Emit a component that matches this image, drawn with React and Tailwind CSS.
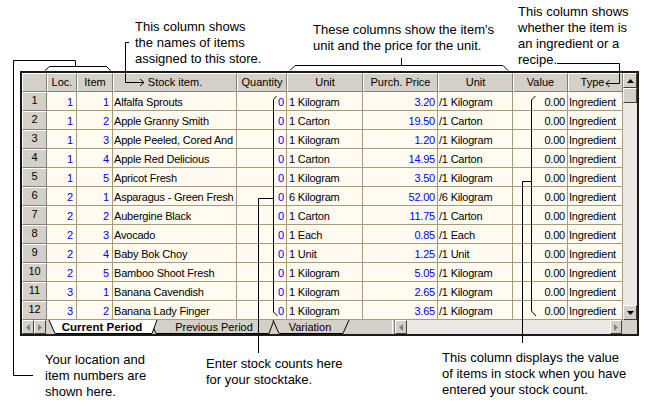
import React from "react";

const rows = [
  [1, 1, "Alfalfa Sprouts", "1 Kilogram", "3.20", "/1 Kilogram"],
  [1, 2, "Apple Granny Smith", "1 Carton", "19.50", "/1 Carton"],
  [1, 3, "Apple Peeled, Cored And", "1 Kilogram", "1.20", "/1 Kilogram"],
  [1, 4, "Apple Red Delicious", "1 Carton", "14.95", "/1 Carton"],
  [1, 5, "Apricot Fresh", "1 Kilogram", "3.50", "/1 Kilogram"],
  [2, 1, "Asparagus - Green Fresh", "6 Kilogram", "52.00", "/6 Kilogram"],
  [2, 2, "Aubergine Black", "1 Carton", "11.75", "/1 Carton"],
  [2, 3, "Avocado", "1 Each", "0.85", "/1 Each"],
  [2, 4, "Baby Bok Choy", "1 Unit", "1.25", "/1 Unit"],
  [2, 5, "Bamboo Shoot Fresh", "1 Kilogram", "5.05", "/1 Kilogram"],
  [3, 1, "Banana Cavendish", "1 Kilogram", "2.65", "/1 Kilogram"],
  [3, 2, "Banana Lady Finger", "1 Kilogram", "3.65", "/1 Kilogram"],
];

const raised =
  "bg-[#d4d0c8] border border-white border-r-[#808080] border-b-[#808080]";

const Cell = ({ className, children }) => (
  <div
    className={`h-[19px] shrink-0 overflow-hidden whitespace-nowrap border-r border-b border-[#ab9a78] bg-[#fffbf0] pt-[3px] leading-[15px] tracking-[-0.2px] ${className}`}
  >
    {children}
  </div>
);

const Head = ({ className, children }) => (
  <div
    className={`h-[19px] shrink-0 overflow-hidden whitespace-nowrap text-center leading-[17px] ${raised} ${className}`}
  >
    {children}
  </div>
);

const Arrow = ({ dir, color = "#000" }) => {
  const pts = {
    up: "0,4 3.5,0 7,4",
    down: "0,0 3.5,4 7,0",
    left: "4,0 0,3.5 4,7",
    right: "0,0 4,3.5 0,7",
  }[dir];
  const vertical = dir === "up" || dir === "down";
  return (
    <svg width={vertical ? 7 : 4} height={vertical ? 4 : 7}>
      <polygon points={pts} fill={color} />
    </svg>
  );
};

const Btn = ({ className, children }) => (
  <div
    className={`flex shrink-0 items-center justify-center bg-[#d4d0c8] border border-white border-r-[#404040] border-b-[#404040] ${className}`}
  >
    {children}
  </div>
);

const App = () => {
  return (
    <div className="relative w-[648px] h-[406px] overflow-hidden bg-white text-black font-['Liberation_Sans',Arial,sans-serif]">
      {/* top notes */}
      <div className="flex h-[71px] text-[13px] leading-[16px]">
        <div className="ml-[135px] mt-[19px] w-[178px] whitespace-nowrap">
          This column shows
          <br />
          the names of items
          <br />
          assigned to this store.
        </div>
        <div className="mt-[22px] w-[205px] whitespace-nowrap">
          These columns show the item's
          <br />
          unit and the price for the unit.
        </div>
        <div className="mt-[4px] whitespace-nowrap">
          This column shows
          <br />
          whether the item is
          <br />
          an ingredient or a
          <br />
          recipe.
        </div>
      </div>

      {/* grid window */}
      <div className="ml-[20px] w-[619px] h-[265px] border-2 border-[#1a1a1a] flex flex-col text-[11px]">
        <div className="flex">
          <div className="w-[601px] flex flex-col">
            <div className="flex">
              <Head className="w-[25px]" />
              <Head className="w-[30px]">Loc.</Head>
              <Head className="w-[36px]">Item</Head>
              <Head className="w-[124px]">Stock item.</Head>
              <Head className="w-[50px]">Quantity</Head>
              <Head className="w-[76px]">Unit</Head>
              <Head className="w-[75px]">Purch. Price</Head>
              <Head className="w-[75px]">Unit</Head>
              <Head className="w-[55px]">Value</Head>
              <Head className="w-[55px] pr-[6px]">Type</Head>
            </div>
            {rows.map((r, i) => (
              <div key={i} className="flex">
                <div
                  className={`w-[25px] h-[19px] shrink-0 text-center leading-[15px] ${raised}`}
                >
                  {i + 1}
                </div>
                <Cell className="w-[30px] text-right pr-[3px] text-[#0000ff]">{r[0]}</Cell>
                <Cell className="w-[36px] text-right pr-[3px] text-[#0000ff]">{r[1]}</Cell>
                <Cell className="w-[124px] pl-[1px]">{r[2]}</Cell>
                <Cell className="w-[50px] text-right pr-[2px] text-[#0000ff]">0</Cell>
                <Cell className="w-[76px] pl-[2px]">{r[3]}</Cell>
                <Cell className="w-[75px] text-right pr-[2px] text-[#0000ff]">{r[4]}</Cell>
                <Cell className="w-[75px] pl-[1px]">{r[5]}</Cell>
                <Cell className="w-[55px] text-right pr-[2px]">0.00</Cell>
                <Cell className="w-[55px] pl-[1px]">Ingredient</Cell>
              </div>
            ))}
          </div>

          {/* vertical scrollbar */}
          <div className="w-[14px] flex flex-col bg-[#ebe9e4]">
            <Btn className="h-[15px]">
              <Arrow dir="up" />
            </Btn>
            <Btn className="h-[15px]" />
            <div className="flex-1" />
            <Btn className="h-[15px]">
              <Arrow dir="down" />
            </Btn>
          </div>
        </div>

        {/* sheet tabs + horizontal scrollbar */}
        <div className="flex h-[14px] bg-[#d4d0c8]">
          <Btn className="w-[12px]">
            <Arrow dir="left" color="#808080" />
          </Btn>
          <Btn className="w-[12px]">
            <Arrow dir="right" color="#808080" />
          </Btn>
          <div className="relative w-[346px] shrink-0">
            <svg className="absolute inset-0" width="346" height="14">
              <polygon points="104,0 110,13.5 223,13.5 228,0" fill="#d4d0c8" />
              <path d="M104 0 L110 13.5 H223 L228 0" fill="none" stroke="#000" />
              <polygon points="227,0 233,13.5 297,13.5 303,0" fill="#d4d0c8" />
              <path d="M227 0 L233 13.5 H297 L303 0" fill="none" stroke="#000" />
              <polygon points="3,0 9,13.5 106,13.5 111,0" fill="#fff" />
              <path d="M3 0 L9 13.5 H106 L111 0" fill="none" stroke="#000" />
            </svg>
            <div className="relative flex h-[14px] leading-[14px] whitespace-nowrap">
              <div className="w-[112px] text-center font-bold text-[11.5px]">Current Period</div>
              <div className="w-[112px] text-center">Previous Period</div>
              <div className="w-[80px] text-center">Variation</div>
            </div>
          </div>
          <div className="w-[3px] shrink-0 border-l border-white border-r border-r-[#808080]" />
          <div className="flex w-[227px] shrink-0 bg-[#ebe9e4]">
            <Btn className="w-[12px]">
              <Arrow dir="left" color="#808080" />
            </Btn>
            <div className="flex-1" />
            <Btn className="w-[12px]">
              <Arrow dir="right" color="#808080" />
            </Btn>
          </div>
          <div className="w-[15px] shrink-0 bg-[#d4d0c8]" />
        </div>
      </div>

      {/* bottom notes */}
      <div className="flex text-[13px] leading-[16px]">
        <div className="ml-[45px] mt-[16px] w-[161px] whitespace-nowrap">
          Your location and
          <br />
          item numbers are
          <br />
          shown here.
        </div>
        <div className="mt-[20px] w-[236px] whitespace-nowrap">
          Enter stock counts here
          <br />
          for your stocktake.
        </div>
        <div className="mt-[14px] whitespace-nowrap">
          This column displays the value
          <br />
          of items in stock when you have
          <br />
          entered your stock count.
        </div>
      </div>

      {/* callout lines */}
      <svg
        className="absolute inset-0 pointer-events-none"
        width="648"
        height="406"
        fill="none"
        stroke="#000"
        strokeWidth="1"
      >
        <path d="M45 70.5 L49.5 66.5 H106.5 L110.5 70.5" />
        <path d="M75.5 66.5 V60.5 H13.5 V375.5 H33" />
        <path d="M129 42.5 H125.5 V82.5 H144" />
        <path d="M140 79 L144 82.5 L140 86" />
        <path d="M290 70.5 L295 65.5 H503 L508 70.5" />
        <path d="M401.5 58 V65.5" />
        <path d="M557 63.5 H619.5 V83.5 H606" />
        <path d="M609.5 80 L606 83.5 L609.5 87" />
        <path d="M276.5 96 L273.5 99.5 V312 L277.5 316" />
        <path d="M273.5 198.5 H258.5 V353" />
        <path d="M535.5 96 L531.5 100 V311 L536 316" />
        <path d="M531.5 181.5 H522.5 V343" />
      </svg>
    </div>
  );
};

export default App;
